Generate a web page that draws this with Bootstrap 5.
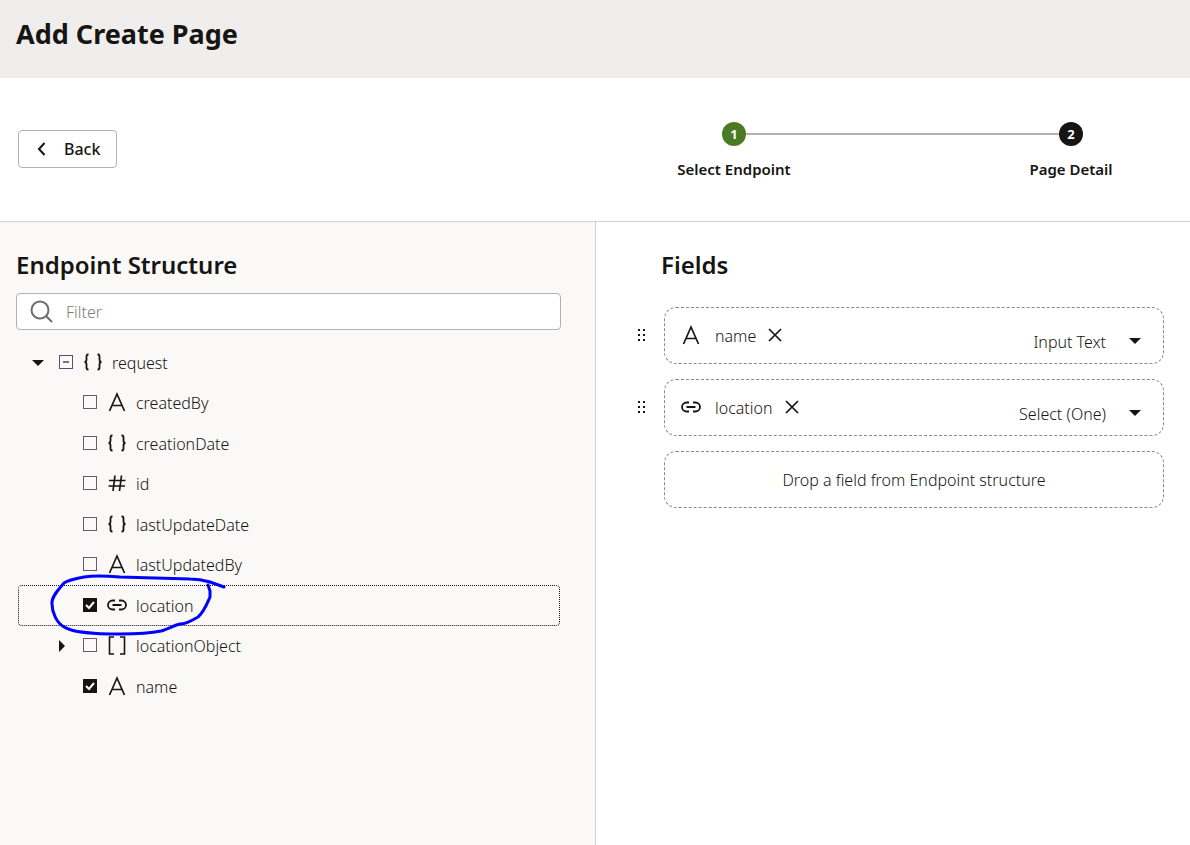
<!DOCTYPE html>
<html lang="en">
<head>
<meta charset="utf-8">
<meta name="viewport" content="width=device-width, initial-scale=1">
<title>Add Create Page</title>
<link href="https://cdn.jsdelivr.net/npm/bootstrap@5.3.0/dist/css/bootstrap.min.css" rel="stylesheet">
<style>
body { font-family: "Noto Sans", "Open Sans", sans-serif; font-size: 16px; line-height: 24px; font-weight: 350; color: #161513; background: #fff; }
.page-head { background: #f0eeed; height: 78px; padding: 14px 16px; }
.page-head h1 { font-size: 27px; line-height: 40px; font-weight: 700; }
.wizard-bar { height: 144px; border-bottom: 1px solid #d1cfcd; }
.back-btn { margin: 52px 18px; height: 38px; padding: 0 16px 0 15px; border: 1px solid #b3b2b1; border-radius: 4px; font-weight: 500; color: #161513; display: flex; align-items: center; gap: 14px; background: #fff; }
.back-btn svg { width: 16px; height: 16px; }
.stepper { padding: 44px 59px 0 79px; }
.step { width: 120px; font-size: 15px; font-weight: 600; white-space: nowrap; gap: 11px; }
.step-dot { width: 24px; height: 24px; border-radius: 50%; color: #fff; font-size: 13px; font-weight: 700; background: #161513; }
.step-dot.done { background: #4a7a23; }
.connector { height: 2px; margin: 11px -48px 0; background: #b3b2b1; }
.pane h2 { font-size: 24px; line-height: 32px; font-weight: 600; }
.structure-pane { background: #faf9f8; padding: 27px 34px 0 16px; }
.fields-pane { border-left: 1px solid #d1cfcd; padding: 27px 26px 0 41px; }
.filter-box { height: 37px; margin-top: 12px; background: #fff; border: 1px solid #b3b2b1; border-radius: 4px; padding-left: 13px; gap: 12px; }
.filter-box input { font-size: 16px; font-weight: inherit; }
.filter-box input::placeholder { color: #7d7b79; }
.tree { margin: 12px 1px 0 2px; }
.tree-row { height: 40px; padding-left: 36px; position: relative; }
.tree-row:nth-child(odd) { height: 41px; }
.tree-row.root { padding-left: 12px; }
.tree-row.current { border: 1px dotted #161513; border-radius: 4px; padding-left: 35px; }
.tree-row label { gap: 9px; }
.twisty { width: 16px; height: 16px; margin-right: 13px; padding: 0; border: 0; background: none; line-height: 0; flex: none; }
.twisty svg { display: block; }
.twisty-gap { width: 29px; flex: none; }
.tick { appearance: none; width: 14px; height: 14px; margin: 0 10px 2px 0; border: 1px solid #6d5a70; background: transparent center/14px 14px no-repeat; flex: none; }
.tick:checked { border-color: #161513; background-color: #161513; background-image: url("data:image/svg+xml,%3Csvg xmlns='http://www.w3.org/2000/svg' viewBox='0 0 14 14'%3E%3Cpath d='M3 7l3 3 5-6' fill='none' stroke='white' stroke-width='2'/%3E%3C/svg%3E"); }
.tick:indeterminate { border-color: #55507a; background-image: url("data:image/svg+xml,%3Csvg xmlns='http://www.w3.org/2000/svg' viewBox='0 0 14 14'%3E%3Cpath d='M4 7h6' stroke='%23777' stroke-width='2'/%3E%3C/svg%3E"); }
.glyph { width: 20px; height: 24px; flex: none; fill: none; stroke: #161513; stroke-width: 2; }
.ink { position: absolute; left: 26px; top: -16px; width: 190px; height: 72px; pointer-events: none; z-index: 2; }
.field-list { gap: 15px; margin-top: 26px; }
.grip { width: 8px; height: 16px; margin-right: 19px; fill: #161513; flex: none; }
.field-card, .drop-zone { height: 57px; border: 1px dashed #8b8987; border-radius: 12px; }
.field-card { padding: 0 16px; }
.field-card .glyph { margin-right: 14px; }
.remove { border: 0; background: none; padding: 0; margin-left: 11px; line-height: 0; }
.kind { appearance: none; border: 0; color: #161513; background: url("data:image/svg+xml,%3Csvg xmlns='http://www.w3.org/2000/svg' viewBox='0 0 12 6'%3E%3Cpath d='M0 0h12l-6 6z' fill='%23161513'/%3E%3C/svg%3E") right 6px top 8px/12px 6px no-repeat; padding: 0 41px 0 0; margin-top: 12px; text-align: right; font-size: 16px; font-weight: inherit; line-height: 24px; }
.drop-zone { margin-left: 27px; }
</style>
</head>
<body class="d-flex flex-column min-vh-100">
<svg class="d-none" aria-hidden="true">
  <symbol id="i-text" viewBox="0 0 20 24"><path d="M2.500 20L10 3l7.500 17M5 14.500h10" stroke-width="1.700"/></symbol>
  <symbol id="i-object" viewBox="0 0 20 24"><path d="M5.500 3.500H5Q3.500 3.500 3.500 5.500V8.500Q3.500 11 1.500 11Q3.500 11 3.500 13.500V16.500Q3.500 18.500 5 18.500H5.500M14.500 3.500h.5Q16.500 3.500 16.500 5.500V8.500Q16.500 11 18.500 11Q16.500 11 16.500 13.500V16.500Q16.500 18.500 15 18.500H14.500" stroke-width="1.800"/></symbol>
  <symbol id="i-number" viewBox="0 0 20 24"><path d="M8 3.500L6 19M14.500 3.500L12.500 19M2 8.500h16.500M1.500 14h16.500" stroke-width="1.700"/></symbol>
  <symbol id="i-link" viewBox="0 0 20 24"><path d="M8 6.500H5.500a4.500 4.500 0 0 0 0 9H8M12 6.500h2.500a4.500 4.500 0 0 1 0 9H12M5.500 11h9" stroke-width="1.800"/></symbol>
  <symbol id="i-array" viewBox="0 0 20 24"><path d="M7 3H2.500v17H7M13 3h4.500v17H13" stroke-width="1.600"/></symbol>
  <symbol id="i-grip" viewBox="0 0 8 16"><path d="M1 1h2v2H1zM6 1h2v2H6zM1 6h2v2H1zM6 6h2v2H6zM1 11h2v2H1zM6 11h2v2H6z"/></symbol>
  <symbol id="i-close" viewBox="0 0 16 16"><path d="M2 1l12 12M14 1L2 13" fill="none" stroke="#161513" stroke-width="1.700"/></symbol>
</svg>

<header class="page-head"><h1 class="m-0">Add Create Page</h1></header>

<div class="wizard-bar row g-0">
  <div class="col-6 d-flex align-items-start">
    <button type="button" class="back-btn"><svg viewBox="0 0 16 16" fill="none" stroke="#161513" stroke-width="2"><path d="M10.500 2L5 8l5.500 6"/></svg>Back</button>
  </div>
  <div class="col-6 stepper d-flex align-items-start">
    <div class="step d-flex flex-column align-items-center flex-shrink-0"><span class="step-dot done d-flex align-items-center justify-content-center">1</span><span>Select Endpoint</span></div>
    <div class="connector flex-grow-1"></div>
    <div class="step d-flex flex-column align-items-center flex-shrink-0"><span class="step-dot d-flex align-items-center justify-content-center">2</span><span>Page Detail</span></div>
  </div>
</div>

<main class="row g-0 flex-grow-1">
  <section class="pane structure-pane col-6">
    <h2 class="m-0">Endpoint Structure</h2>
    <label class="filter-box d-flex align-items-center">
      <svg width="24" height="24" viewBox="0 0 24 24" fill="none" stroke="#6f6d6b" stroke-width="2"><circle cx="10" cy="10" r="8.500"/><path d="M16 16l6 6"/></svg>
      <input type="text" class="border-0 bg-transparent flex-grow-1 p-0" placeholder="Filter" aria-label="Filter">
    </label>
    <ul class="tree list-unstyled mb-0">
      <li class="tree-row root d-flex align-items-center"><button type="button" class="twisty" aria-label="Collapse request"><svg width="16" height="16"><path d="M2 5h12l-6 6z" fill="#161513"/></svg></button><input class="tick" type="checkbox" id="t0"><label for="t0" class="d-flex align-items-center"><svg class="glyph"><use href="#i-object"/></svg>request</label></li>
      <li class="tree-row d-flex align-items-center"><span class="twisty-gap"></span><input class="tick" type="checkbox" id="t1"><label for="t1" class="d-flex align-items-center"><svg class="glyph"><use href="#i-text"/></svg>createdBy</label></li>
      <li class="tree-row d-flex align-items-center"><span class="twisty-gap"></span><input class="tick" type="checkbox" id="t2"><label for="t2" class="d-flex align-items-center"><svg class="glyph"><use href="#i-object"/></svg>creationDate</label></li>
      <li class="tree-row d-flex align-items-center"><span class="twisty-gap"></span><input class="tick" type="checkbox" id="t3"><label for="t3" class="d-flex align-items-center"><svg class="glyph"><use href="#i-number"/></svg>id</label></li>
      <li class="tree-row d-flex align-items-center"><span class="twisty-gap"></span><input class="tick" type="checkbox" id="t4"><label for="t4" class="d-flex align-items-center"><svg class="glyph"><use href="#i-object"/></svg>lastUpdateDate</label></li>
      <li class="tree-row d-flex align-items-center"><span class="twisty-gap"></span><input class="tick" type="checkbox" id="t5"><label for="t5" class="d-flex align-items-center"><svg class="glyph"><use href="#i-text"/></svg>lastUpdatedBy</label></li>
      <li class="tree-row current d-flex align-items-center"><span class="twisty-gap"></span><input class="tick" type="checkbox" id="t6" checked><label for="t6" class="d-flex align-items-center"><svg class="glyph"><use href="#i-link"/></svg>location</label>
        <svg class="ink" viewBox="45 570 190 72" fill="none" stroke="#0000ff" stroke-width="3" stroke-linecap="round" stroke-linejoin="round"><path d="M224 587L210 582Q200 579 190 579L120 577Q96 575 84 577Q68 580 64 583C59 589 51 597 52 604C52 613 57 623 64 627C74 633 94 634 120 634Q147 634 161 631C168 629 175 625 180 624C187 624 192 620 198 617C204 612 207 604 210 597L210 591L208 585"/></svg>
      </li>
      <li class="tree-row d-flex align-items-center"><button type="button" class="twisty" aria-label="Expand locationObject"><svg width="16" height="16"><path d="M5 2v12l6-6z" fill="#161513"/></svg></button><input class="tick" type="checkbox" id="t7"><label for="t7" class="d-flex align-items-center"><svg class="glyph"><use href="#i-array"/></svg>locationObject</label></li>
      <li class="tree-row d-flex align-items-center"><span class="twisty-gap"></span><input class="tick" type="checkbox" id="t8" checked><label for="t8" class="d-flex align-items-center"><svg class="glyph"><use href="#i-text"/></svg>name</label></li>
    </ul>
  </section>

  <section class="pane fields-pane col-6">
    <h2 class="m-0 ms-4">Fields</h2>
    <div class="field-list d-flex flex-column">
      <div class="d-flex align-items-center">
        <svg class="grip"><use href="#i-grip"/></svg>
        <div class="field-card flex-grow-1 d-flex align-items-center">
          <svg class="glyph"><use href="#i-text"/></svg><span id="f1">name</span>
          <button type="button" class="remove" aria-label="Remove name"><svg width="16" height="16"><use href="#i-close"/></svg></button>
          <select class="kind ms-auto" aria-labelledby="f1"><option>Input Text</option></select>
        </div>
      </div>
      <div class="d-flex align-items-center">
        <svg class="grip"><use href="#i-grip"/></svg>
        <div class="field-card flex-grow-1 d-flex align-items-center">
          <svg class="glyph"><use href="#i-link"/></svg><span id="f2">location</span>
          <button type="button" class="remove" aria-label="Remove location"><svg width="16" height="16"><use href="#i-close"/></svg></button>
          <select class="kind ms-auto" aria-labelledby="f2"><option>Select (One)</option></select>
        </div>
      </div>
      <div class="drop-zone d-flex align-items-center justify-content-center">Drop a field from Endpoint structure</div>
    </div>
  </section>
</main>
<script src="https://cdn.jsdelivr.net/npm/bootstrap@5.3.0/dist/js/bootstrap.bundle.min.js"></script>
<script>document.getElementById('t0').indeterminate = true;</script>
</body>
</html>
